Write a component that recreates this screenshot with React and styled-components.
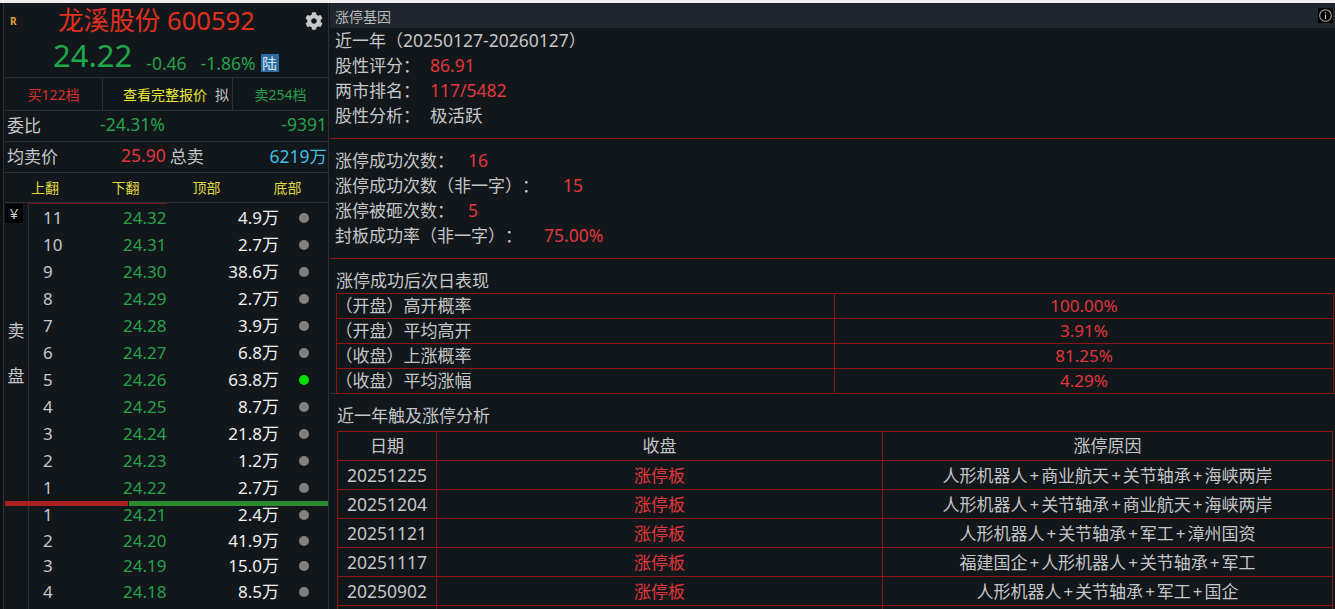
import React from "react";
import styled, { createGlobalStyle } from "styled-components";
import { FaCog } from "react-icons/fa";

const sellRows = [
  ["11", "24.32", "4.9万"],
  ["10", "24.31", "2.7万"],
  ["9", "24.30", "38.6万"],
  ["8", "24.29", "2.7万"],
  ["7", "24.28", "3.9万"],
  ["6", "24.27", "6.8万"],
  ["5", "24.26", "63.8万", true],
  ["4", "24.25", "8.7万"],
  ["3", "24.24", "21.8万"],
  ["2", "24.23", "1.2万"],
  ["1", "24.22", "2.7万"],
];

const buyRows = [
  ["1", "24.21", "2.4万"],
  ["2", "24.20", "41.9万"],
  ["3", "24.19", "15.0万"],
  ["4", "24.18", "8.5万"],
];

const nextDay = [
  ["（开盘）高开概率", "100.00%"],
  ["（开盘）平均高开", "3.91%"],
  ["（收盘）上涨概率", "81.25%"],
  ["（收盘）平均涨幅", "4.29%"],
];

const history = [
  ["20251225", "涨停板", "人形机器人+商业航天+关节轴承+海峡两岸"],
  ["20251204", "涨停板", "人形机器人+关节轴承+商业航天+海峡两岸"],
  ["20251121", "涨停板", "人形机器人+关节轴承+军工+漳州国资"],
  ["20251117", "涨停板", "福建国企+人形机器人+关节轴承+军工"],
  ["20250902", "涨停板", "人形机器人+关节轴承+军工+国企"],
  ["", "", ""],
];

const Reason = ({ text }) => {
  const parts = text.split("+");
  return parts.map((part, i) => (
    <React.Fragment key={part}>
      {part}
      {i < parts.length - 1 && <Plus>+</Plus>}
    </React.Fragment>
  ));
};

const App = () => {
  return (
    <Page>
      <GlobalStyle />
      <LeftPanel>
        <Head>
          <TitleRow>
            <RBadge>R</RBadge>
            <StockName>龙溪股份 600592</StockName>
            <GearIcon />
          </TitleRow>
          <PriceRow>
            <BigPrice>24.22</BigPrice>
            <Change $left={14}>-0.46</Change>
            <Change $left={14}>-1.86%</Change>
            <MarketBadge>陆</MarketBadge>
          </PriceRow>
        </Head>
        <LevelBar>
          <LevelCell $color="#d8302e">买122档</LevelCell>
          <QuoteCell>
            <QuoteLink>查看完整报价</QuoteLink>
            <QuoteMark>拟</QuoteMark>
          </QuoteCell>
          <LevelCell $color="#26a04a">卖254档</LevelCell>
        </LevelBar>
        <StatRow>
          <StatLabel>委比</StatLabel>
          <StatValue $color="#26a04a" $left={59}>-24.31%</StatValue>
          <StatEnd $color="#26a04a">-9391</StatEnd>
        </StatRow>
        <StatRow>
          <StatLabel>均卖价</StatLabel>
          <StatValue $color="#e0363a" $left={63}>25.90</StatValue>
          <StatLabel $left={4}>总卖</StatLabel>
          <StatEnd $color="#3cbfe0">6219万</StatEnd>
        </StatRow>
        <Tabs>
          <Tab>上翻</Tab>
          <Tab>下翻</Tab>
          <Tab>顶部</Tab>
          <Tab>底部</Tab>
        </Tabs>
        <SellBook>
          <SideColumn>
            <CurrencyBox>¥</CurrencyBox>
            <SideLabel>卖</SideLabel>
            <SideLabel $gap={21}>盘</SideLabel>
          </SideColumn>
          <BookRows>
            <TopMark />
            {sellRows.map(([level, price, volume, active]) => (
              <BookRow key={level} $height={27}>
                <Level>{level}</Level>
                <Price>{price}</Price>
                <Volume>{volume}</Volume>
                <Dot $active={active} />
              </BookRow>
            ))}
          </BookRows>
        </SellBook>
        <SplitBar>
          <SplitRed />
          <SplitGreen />
        </SplitBar>
        <BuyBook>
          <SideColumn />
          <BookRows>
            {buyRows.map(([level, price, volume]) => (
              <BookRow key={level} $height={25.7}>
                <Level>{level}</Level>
                <Price>{price}</Price>
                <Volume>{volume}</Volume>
                <Dot />
              </BookRow>
            ))}
          </BookRows>
        </BuyBook>
      </LeftPanel>
      <RightPanel>
        <PanelHeader>
          <PanelTitle>涨停基因</PanelTitle>
          <InfoBox>
            <svg width="13" height="13" viewBox="0 0 13 13" fill="none">
              <circle cx="6.5" cy="6.5" r="5.8" stroke="#a8a8a8" strokeWidth="1.1" />
              <path d="M6.5 3.2v1.2M6.5 5.6v4.4" stroke="#d0d0d0" strokeWidth="1.1" />
            </svg>
          </InfoBox>
        </PanelHeader>
        <Section $height={111}>
          <Line>
            近一年（<Digits>20250127-20260127</Digits>）
          </Line>
          <Line>
            股性评分：<Val $gap={10}>86.91</Val>
          </Line>
          <Line>
            两市排名：<Val $gap={10}>117/5482</Val>
          </Line>
          <Line>
            股性分析：<Val $gap={10} $plain>极活跃</Val>
          </Line>
        </Section>
        <Section $height={120} $pad={9}>
          <Line>
            涨停成功次数：<Val $gap={14}>16</Val>
          </Line>
          <Line>
            涨停成功次数（非一字）：<Val $gap={24}>15</Val>
          </Line>
          <Line>
            涨停被砸次数：<Val $gap={14}>5</Val>
          </Line>
          <Line>
            封板成功率（非一字）：<Val $gap={22}>75.00%</Val>
          </Line>
        </Section>
        <NextDayBlock>
          <Line>涨停成功后次日表现</Line>
          <NextDayTable>
            <colgroup>
              <col style={{ width: 498 }} />
              <col />
            </colgroup>
            <tbody>
              {nextDay.map(([label, value]) => (
                <tr key={label}>
                  <NextLabel>{label}</NextLabel>
                  <NextValue>{value}</NextValue>
                </tr>
              ))}
            </tbody>
          </NextDayTable>
        </NextDayBlock>
        <HistoryBlock>
          <HistoryTitle>近一年触及涨停分析</HistoryTitle>
          <HistoryTable>
            <colgroup>
              <col style={{ width: 99 }} />
              <col style={{ width: 446 }} />
              <col />
            </colgroup>
            <thead>
              <tr>
                <HistoryHead>日期</HistoryHead>
                <HistoryHead>收盘</HistoryHead>
                <HistoryHead>涨停原因</HistoryHead>
              </tr>
            </thead>
            <tbody>
              {history.map(([date, close, reason], i) => (
                <tr key={i}>
                  <HistoryCell>
                    <Digits>{date}</Digits>
                  </HistoryCell>
                  <HistoryCell $red>{close}</HistoryCell>
                  <HistoryCell>
                    <Reason text={reason} />
                  </HistoryCell>
                </tr>
              ))}
            </tbody>
          </HistoryTable>
        </HistoryBlock>
      </RightPanel>
    </Page>
  );
};

export default App;

const GlobalStyle = createGlobalStyle`
  html, body {
    margin: 0;
    padding: 0;
    height: 100%;
    overflow: hidden;
    background: #12171c;
  }
  * {
    box-sizing: border-box;
    text-spacing-trim: space-all;
  }
`;

const Page = styled.div`
  width: 1335px;
  height: 609px;
  overflow: hidden;
  display: flex;
  background: #12171c;
  border-top: 3px solid #f0f0f0;
  color: #c4c6c8;
  font-family: "Noto Sans", "Noto Sans CJK SC", sans-serif;
  font-size: 17px;
`;

const LeftPanel = styled.div`
  width: 329px;
  flex: none;
  padding-left: 5px;
  display: flex;
  flex-direction: column;
  border-right: 1px solid #2a3036;
  box-shadow: inset 3px 0 0 #0d1114, inset 4px 0 0 #2a3036;
`;

const Head = styled.div`
  height: 74px;
  display: flex;
  flex-direction: column;
`;

const TitleRow = styled.div`
  height: 34px;
  display: flex;
  align-items: center;
  padding-top: 2px;
`;

const RBadge = styled.span`
  width: 53px;
  padding-left: 5px;
  font-size: 10px;
  font-weight: 700;
  color: #e0a030;
`;

const StockName = styled.span`
  font-size: 25.6px;
  line-height: 32px;
  color: #e0301e;
`;

const GearIcon = styled(FaCog)`
  width: 18px;
  height: 18px;
  margin-left: auto;
  margin-right: 5px;
  color: #c8c8c8;
`;

const PriceRow = styled.div`
  height: 40px;
  display: flex;
  align-items: flex-end;
  padding-left: 48px;
`;

const BigPrice = styled.span`
  font-size: 31px;
  line-height: 34px;
  margin-bottom: 5px;
  color: #1ea84a;
`;

const Change = styled.span`
  margin-left: ${(p) => p.$left}px;
  font-size: 17.5px;
  line-height: 28px;
  color: #26a04a;
`;

const MarketBadge = styled.span`
  width: 18px;
  height: 18px;
  margin-left: 5px;
  margin-bottom: 5px;
  background: #2a6aa5;
  color: #d8e4f0;
  font-size: 15px;
  line-height: 18px;
  text-align: center;
`;

const LevelBar = styled.div`
  height: 33px;
  display: grid;
  grid-template-columns: 97px 131px 1fr;
  border-top: 1px solid #2a3036;
`;

const LevelCell = styled.div`
  display: flex;
  align-items: center;
  justify-content: center;
  font-size: 14px;
  color: ${(p) => p.$color};
`;

const QuoteCell = styled.div`
  display: flex;
  align-items: center;
  padding-left: 20px;
  gap: 8px;
  font-size: 14px;
  border-left: 1px solid #2a3036;
  border-right: 1px solid #2a3036;
`;

const QuoteLink = styled.span`
  color: #e8e830;
`;

const QuoteMark = styled.span`
  color: #c4c6c8;
`;

const StatRow = styled.div`
  height: 31px;
  display: flex;
  align-items: center;
  padding: 0 1px 4px 2px;
  border-top: 1px solid #2a3036;
`;

const StatLabel = styled.span`
  margin-left: ${(p) => p.$left || 0}px;
  font-size: 17px;
  color: #c4c6c8;
`;

const StatValue = styled.span`
  margin-left: ${(p) => p.$left}px;
  font-size: 17.5px;
  color: ${(p) => p.$color};
`;

const StatEnd = styled.span`
  margin-left: auto;
  font-size: 17.5px;
  color: ${(p) => p.$color};
`;

const Tabs = styled.div`
  height: 31px;
  display: grid;
  grid-template-columns: 80px repeat(3, 81px);
  align-items: center;
  justify-items: center;
  padding-bottom: 2px;
  border-top: 1px solid #2a3036;
  border-bottom: 1px solid #2a3036;
`;

const Tab = styled.span`
  font-size: 14px;
  color: #e0d840;
`;

const SellBook = styled.div`
  display: flex;
  height: 298px;
`;

const BuyBook = styled.div`
  display: flex;
  flex: 1;
  margin-top: -4px;
  min-height: 0;
`;

const SideColumn = styled.div`
  width: 24px;
  flex: none;
  display: flex;
  flex-direction: column;
  border-right: 1px solid #2a3036;
`;

const CurrencyBox = styled.div`
  width: 18px;
  height: 19px;
  margin-top: 1px;
  margin-bottom: 96px;
  background: #000;
  color: #d0d0d0;
  font-size: 15px;
  line-height: 19px;
  text-align: center;
`;

const SideLabel = styled.span`
  width: 22px;
  margin-top: ${(p) => p.$gap || 0}px;
  text-align: center;
  line-height: 24px;
  color: #c4c6c8;
`;

const BookRows = styled.div`
  flex: 1;
  display: flex;
  flex-direction: column;
`;

const TopMark = styled.div`
  width: 138px;
  height: 1px;
  background: #6e1a1a;
`;

const BookRow = styled.div`
  height: ${(p) => p.$height}px;
  flex: none;
  display: grid;
  grid-template-columns: 80px 71px 85px 49px;
  align-items: center;
  line-height: 24px;
  padding-left: 14px;
`;

const Level = styled.span`
  color: #c4c8d0;
`;

const Price = styled.span`
  color: #26a04a;
`;

const Volume = styled.span`
  text-align: right;
  color: #f0f0f0;
`;

const Dot = styled.span`
  justify-self: center;
  width: 10px;
  height: 10px;
  border-radius: 50%;
  background: ${(p) => (p.$active ? "#00e000" : "#808080")};
`;

const SplitBar = styled.div`
  height: 5px;
  flex: none;
  display: flex;
  gap: 1px;
  position: relative;
  z-index: 1;
`;

const SplitRed = styled.div`
  width: 123px;
  background: #a82020;
`;

const SplitGreen = styled.div`
  flex: 1;
  background: #2e8b2e;
`;

const RightPanel = styled.div`
  flex: 1;
  min-width: 0;
  display: flex;
  flex-direction: column;
  padding-left: 1px;
`;

const PanelHeader = styled.div`
  height: 25px;
  flex: none;
  display: flex;
  align-items: center;
  justify-content: space-between;
  padding: 0 2px 0 5px;
  background: #1f262d;
`;

const PanelTitle = styled.span`
  font-size: 14px;
  color: #b8babc;
`;

const InfoBox = styled.div`
  width: 15px;
  height: 15px;
  display: flex;
  align-items: center;
  justify-content: center;
  background: #000;
`;

const Section = styled.div`
  height: ${(p) => p.$height}px;
  flex: none;
  padding: ${(p) => p.$pad || 0}px 0 0 5px;
  border-bottom: 1px solid #8a1616;
`;

const Line = styled.div`
  height: 25px;
  line-height: 25px;
  font-size: 17px;
  color: #c4c6c8;
  white-space: nowrap;
`;

const Digits = styled.span`
  font-size: 17.5px;
`;

const Val = styled.span`
  margin-left: ${(p) => p.$gap}px;
  font-size: 17.5px;
  color: ${(p) => (p.$plain ? "#c4c6c8" : "#e0363a")};
`;

const NextDayBlock = styled.div`
  height: 135px;
  flex: none;
  padding: 9px 1px 0 6px;
  border-bottom: 1px solid #30363c;
`;

const NextDayTable = styled.table`
  width: 998px;
  border-collapse: collapse;
  table-layout: fixed;
`;

const NextLabel = styled.td`
  height: 25px;
  padding: 0 0 1px 7px;
  border: 1px solid #8a1616;
  font-size: 17px;
  line-height: 22px;
  color: #c4c6c8;
  text-spacing-trim: trim-start;
`;

const NextValue = styled.td`
  padding: 0 0 1px;
  border: 1px solid #8a1616;
  font-size: 17px;
  line-height: 22px;
  text-align: center;
  color: #e0363a;
`;

const HistoryBlock = styled.div`
  flex: 1;
  min-height: 0;
  padding-left: 7px;
`;

const HistoryTitle = styled.div`
  height: 37px;
  padding-top: 9px;
  line-height: 25px;
  font-size: 17px;
  color: #c4c6c8;
`;

const HistoryTable = styled.table`
  width: 996px;
  border-collapse: collapse;
  table-layout: fixed;
`;

const HistoryHead = styled.th`
  height: 29px;
  padding: 0;
  border: 1px solid #8a1616;
  font-size: 17px;
  line-height: 22px;
  font-weight: 400;
  color: #c4c6c8;
`;

const HistoryCell = styled.td`
  height: 29px;
  padding: 1px 0 0;
  border: 1px solid #8a1616;
  font-size: 17px;
  line-height: 22px;
  text-align: center;
  color: ${(p) => (p.$red ? "#e0363a" : "#c4c6c8")};
`;

const Plus = styled.span`
  margin: 0 2px;
`;
